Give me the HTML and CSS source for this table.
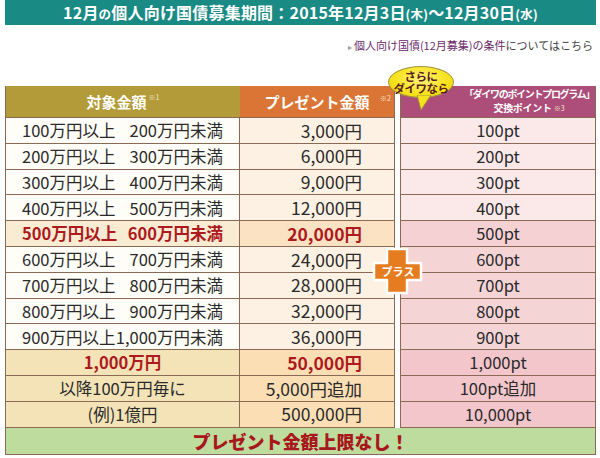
FILE: index.html
```html
<!DOCTYPE html>
<html lang="ja">
<head>
<meta charset="utf-8">
<link rel="stylesheet" href="styles.css">
</head>
<body>
<div class="page">
  <div class="banner">12月<small>の</small>個人向け国債募集期間：2015年12月3日<small>(木)</small>～12月30日<small>(水)</small></div>
  <div class="link"><span class="arrow">▸</span><span class="lk">個人向け国債(12月募集)の条件</span>についてはこちら</div>

  <div class="table">
    <div class="row head">
      <div class="c1">対象金額<span class="note">※1</span></div>
      <div class="c2">プレゼント金額<span class="note n2">※2</span></div>
      <div class="gap"></div>
      <div class="c3"><span class="l1">「ダイワのポイントプログラム」</span><span class="l2">交換ポイント<span class="note n3">※3</span></span></div>
    </div>

    <div class="row"><div class="c1"><span>100万円以上</span><span>200万円未満</span></div><div class="c2">3,000円</div><div class="gap"></div><div class="c3">100pt</div></div>
    <div class="row"><div class="c1"><span>200万円以上</span><span>300万円未満</span></div><div class="c2">6,000円</div><div class="gap"></div><div class="c3">200pt</div></div>
    <div class="row"><div class="c1"><span>300万円以上</span><span>400万円未満</span></div><div class="c2">9,000円</div><div class="gap"></div><div class="c3">300pt</div></div>
    <div class="row"><div class="c1"><span>400万円以上</span><span>500万円未満</span></div><div class="c2">12,000円</div><div class="gap"></div><div class="c3">400pt</div></div>
    <div class="row hl"><div class="c1 red"><span>500万円以上</span><span>600万円未満</span></div><div class="c2 red">20,000円</div><div class="gap"></div><div class="c3">500pt</div></div>
    <div class="row pk"><div class="c1"><span>600万円以上</span><span>700万円未満</span></div><div class="c2">24,000円</div><div class="gap"></div><div class="c3">600pt</div></div>
    <div class="row pk"><div class="c1"><span>700万円以上</span><span>800万円未満</span></div><div class="c2">28,000円</div><div class="gap"></div><div class="c3">700pt</div></div>
    <div class="row pk"><div class="c1"><span>800万円以上</span><span>900万円未満</span></div><div class="c2">32,000円</div><div class="gap"></div><div class="c3">800pt</div></div>
    <div class="row pk"><div class="c1"><span>900万円以上</span><span>1,000万円未満</span></div><div class="c2">36,000円</div><div class="gap"></div><div class="c3">900pt</div></div>
    <div class="row tan"><div class="c1 ctr red">1,000万円</div><div class="c2 red">50,000円</div><div class="gap"></div><div class="c3">1,000pt</div></div>
    <div class="row tan"><div class="c1 ctr">以降100万円毎に</div><div class="c2">5,000円追加</div><div class="gap"></div><div class="c3">100pt追加</div></div>
    <div class="row tan"><div class="c1 ctr">(例)1億円</div><div class="c2">500,000円</div><div class="gap"></div><div class="c3">10,000pt</div></div>
    <div class="row green"><div class="full">プレゼント金額上限なし！</div></div>
  </div>

  <div class="bubble">
    <svg class="tail" width="14" height="16" viewBox="0 0 14 16"><polygon points="0,0 14,0 4,15" fill="#f6e21a" stroke="#9a8a40" stroke-width="0.8"/></svg>
    <div class="btext">さらに<br>ダイワなら</div>
  </div>

  <div class="plus">
    <svg width="52" height="48" viewBox="0 0 52 48">
      <polygon points="15,2 35,2 35,16 49,16 49,33 35,33 35,46 15,46 15,33 2,33 2,16 15,16" fill="#e57d20" stroke="#fff" stroke-width="2.5" stroke-linejoin="round"/>
    </svg>
    <span class="ptext">プラス</span>
  </div>
</div>
</body>
</html>
```

FILE: styles.css
```css
* {
  box-sizing: border-box;
  margin: 0;
  padding: 0;
}

body {
  width: 600px;
  height: 458px;
  overflow: hidden;
  background: #fff;
  font-family: "Noto Sans CJK JP", "Noto Sans", sans-serif;
  color: #2a2a2a;
}

.page {
  position: relative;
  padding: 0 4px 0 5px;
}

.banner {
  height: 25px;
  background: #1a8a85;
  color: #fff;
  font-weight: 700;
  font-size: 16px;
  line-height: 25px;
  text-align: center;
  letter-spacing: 0.2px;
}

.banner small {
  font-size: 12.5px;
}

.link {
  margin-top: 12px;
  text-align: right;
  font-size: 11px;
  line-height: 16px;
  color: #444;
  padding-right: 3px;
}

.link .lk {
  color: #6a2a6a;
}

.link .arrow {
  color: #999;
  font-size: 8px;
  margin-right: 2px;
}

.table {
  margin-top: 31px;
}

.row {
  display: grid;
  grid-template-columns: 235px 155px 5px 196px;
  height: 25.8px;
  font-size: 16.5px;
  line-height: 1;
}

.row > div {
  display: flex;
  align-items: center;
}

.c1 {
  background: #fffdf7;
  border-left: 1px solid #8b6a55;
  border-right: 1px solid #8b6a55;
  border-bottom: 1px solid #8b6a55;
  padding: 0 16px 0 16px;
  justify-content: space-between;
}

.c1.ctr {
  justify-content: center;
}

.c2 {
  background: #fdf1e3;
  border-right: 1px solid #8b6a55;
  border-bottom: 1px solid #8b6a55;
  justify-content: flex-end;
  padding-right: 32px;
  font-size: 17.5px;
}

.gap {
  background: #fff;
}

.c3 {
  background: #fbe9e9;
  border-left: 1px solid #8b6a55;
  border-right: 1px solid #8b6a55;
  border-bottom: 1px solid #8b6a55;
  justify-content: center;
}

.red {
  color: #ad1a1e;
  font-weight: 700;
}

.row.hl .c1 { background: #f9ecd3; }
.row.hl .c2 { background: #fbe2c3; }
.row.hl .c3 { background: #f5d1d4; }

.row.pk .c3 { background: #f5d4d6; }

.row.tan .c1 { background: #f3e3b6; }
.row.tan .c2 { background: #fcdeb5; }
.row.tan .c3 { background: #f2c6ca; }

.row.head {
  height: 32px;
  color: #fff;
  font-weight: 700;
  font-size: 15px;
}

.row.head .c1 {
  background: #b49b3a;
  justify-content: center;
  border-right: none;
}

.row.head .c2 {
  background: #db7536;
  justify-content: center;
  padding-right: 0;
  position: relative;
  font-size: 15px;
}

.row.head .c3 {
  background: #ad4d79;
  flex-direction: column;
  justify-content: center;
  align-items: center;
  padding-left: 62px;
  font-size: 10px;
  line-height: 14px;
  white-space: nowrap;
}

.row.head .c3 .l1 {
  letter-spacing: -1.3px;
}

.row.head .c3 .l2 {
  letter-spacing: -0.3px;
}

.note {
  font-size: 7px;
  font-weight: 400;
  margin-left: 2px;
  position: relative;
  top: -4px;
  color: #f3e6c8;
  letter-spacing: 0;
}

.note.n3 {
  top: -1px;
}

.row.head .c2 .n2 {
  position: absolute;
  right: 3px;
  top: 9px;
}

.row.green {
  display: block;
  height: 27px;
}

.row.green .full {
  height: 27px;
  width: 591px;
  background: #bddc9e;
  border: 1px solid #8b6a55;
  border-top: none;
  justify-content: center;
  color: #a8171c;
  font-weight: 900;
  font-size: 18px;
}

.bubble {
  position: absolute;
  left: 388px;
  top: 66px;
  width: 66px;
  height: 32px;
  border-radius: 50%;
  background: radial-gradient(ellipse at 50% 40%, #fff27a 0%, #f6e21a 60%, #e9cf10 100%);
  border: 1px solid #a39540;
  display: flex;
  align-items: center;
  justify-content: center;
}

.bubble .tail {
  position: absolute;
  left: 28px;
  top: 28px;
}

.btext {
  position: relative;
  font-size: 11.5px;
  line-height: 12px;
  font-weight: 700;
  color: #5a1e1e;
  text-align: center;
  letter-spacing: -0.5px;
}

.plus {
  position: absolute;
  left: 372px;
  top: 247px;
  width: 52px;
  height: 48px;
}

.plus svg {
  display: block;
}

.ptext {
  position: absolute;
  left: 0;
  top: 16px;
  width: 52px;
  height: 17px;
  line-height: 17px;
  text-align: center;
  color: #fff;
  font-weight: 700;
  font-size: 11px;
}
```
